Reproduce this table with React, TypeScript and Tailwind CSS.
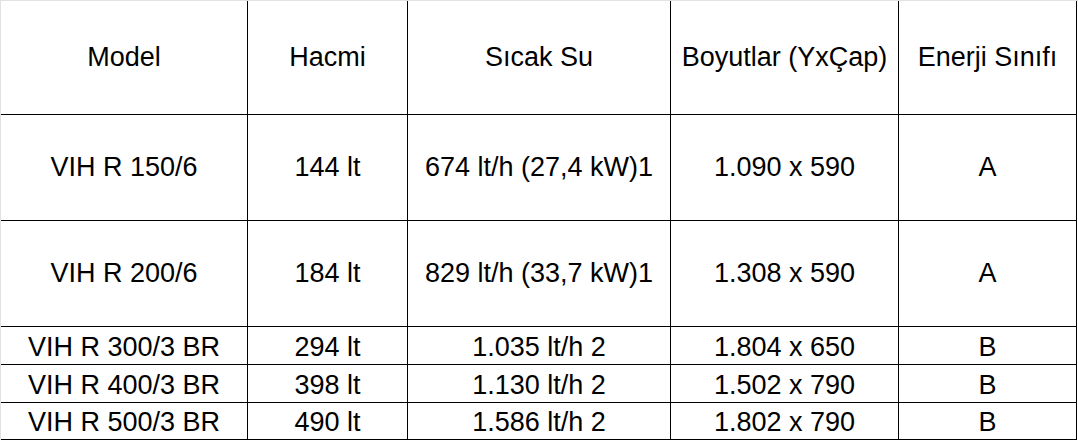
import React from 'react'

const headers = ["Model", "Hacmi", "Sıcak Su", "Boyutlar (YxÇap)", "Enerji Sınıfı"]

const rows = [
    { h: "h-[106px]", cells: ["VIH R 150/6", "144 lt", "674 lt/h (27,4 kW)1", "1.090 x 590", "A"] },
    { h: "h-[106px]", cells: ["VIH R 200/6", "184 lt", "829 lt/h (33,7 kW)1", "1.308 x 590", "A"] },
    { h: "h-[38px] pt-[3px]", cells: ["VIH R 300/3 BR", "294 lt", "1.035 lt/h 2", "1.804 x 650", "B"] },
    { h: "h-[38px] pt-[3px]", cells: ["VIH R 400/3 BR", "398 lt", "1.130 lt/h 2", "1.502 x 790", "B"] },
    { h: "h-[37px] pt-[3px]", cells: ["VIH R 500/3 BR", "490 lt", "1.586 lt/h 2", "1.802 x 790", "B"] },
]

const widths = ["w-[247px]", "w-[160px]", "w-[263px]", "w-[228px]", "w-[178px]"]

const App = () => {
    return (
        <div className="w-[1078px] h-[441px] bg-white overflow-hidden">
            <div
                className="border-t border-l border-[#e2e2e2] w-[1078px] text-[27px] text-black leading-none"
                style={{ fontFamily: '"Liberation Sans", Arial, sans-serif' }}
            >
                <div className="flex h-[114px]">
                    {headers.map((t, i) => (
                        <div key={i} className={`${widths[i]} shrink-0 flex items-center justify-center border-r border-b border-black`}>
                            {t}
                        </div>
                    ))}
                </div>
                {rows.map((r, ri) => (
                    <div key={ri} className="flex">
                        {r.cells.map((t, i) => (
                            <div key={i} className={`${widths[i]} ${r.h} shrink-0 flex items-center justify-center border-r border-b border-black whitespace-nowrap`}>
                                {t}
                            </div>
                        ))}
                    </div>
                ))}
            </div>
        </div>
    )
}
export default App
